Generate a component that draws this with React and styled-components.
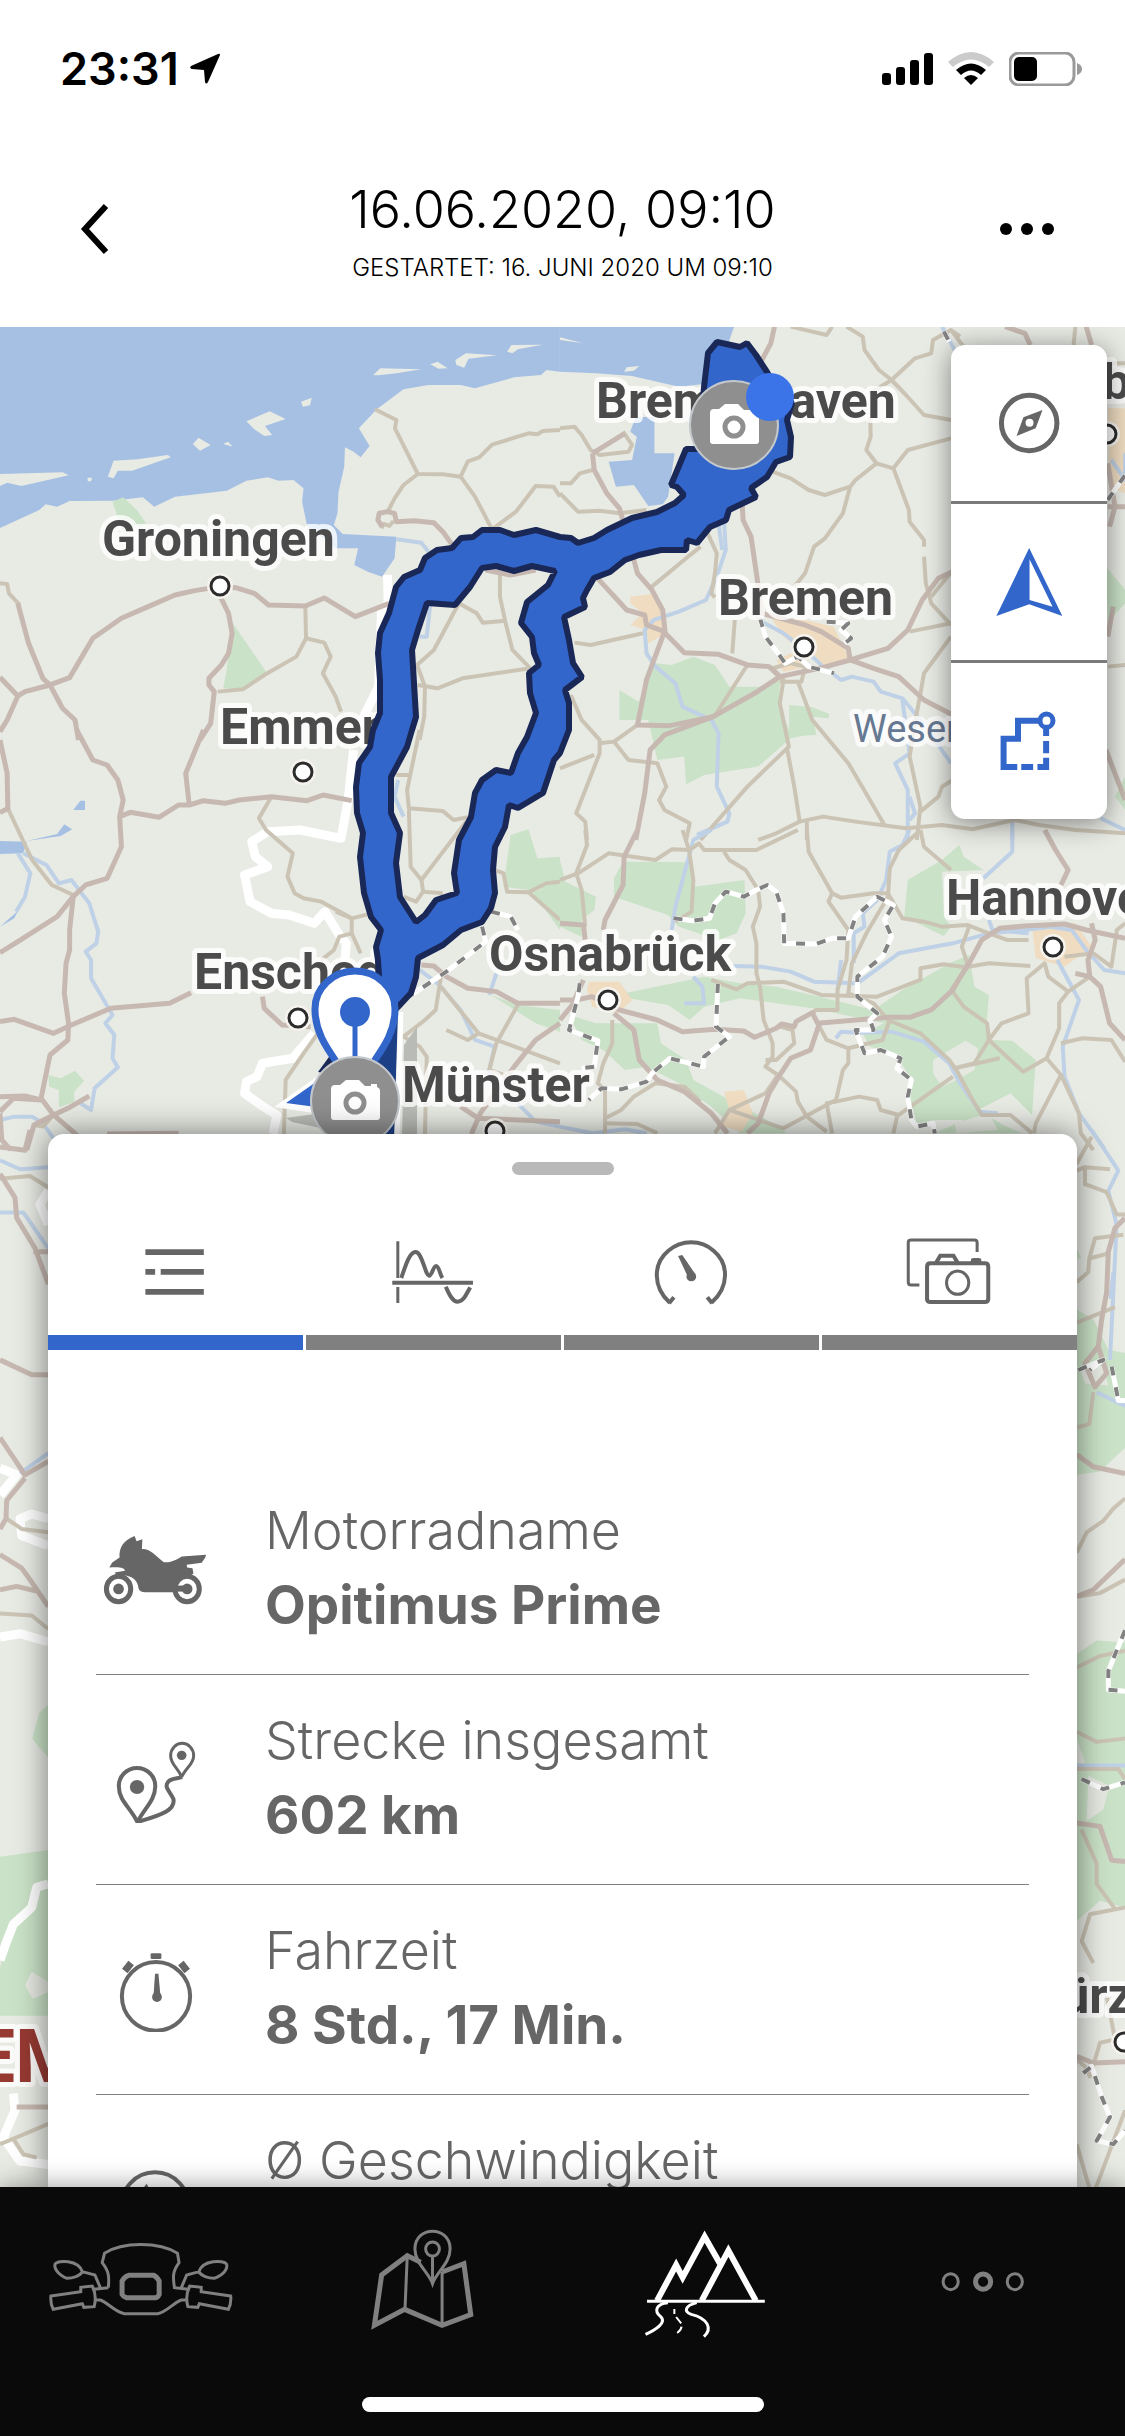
import React, { useState } from 'react'
import styled, { createGlobalStyle } from 'styled-components'

/* Each tile keeps its own drawing grid and is placed on the map by origin and scale */
const tiles = [
  {
    id: 'friesland',
    place: 'translate(0 320) scale(0.3571 0.3333)',
    water: [
      'M0 0H1568V155L1530 150L1515 165L1440 172L1330 205L1290 195L1200 195L1130 208L1055 268L1005 325L1035 378L1010 412L990 395L966 382L964 440L948 515L945 580L935 615L960 642L1110 650L1105 715L1070 770L1030 755L992 735L1003 685L940 685L860 618L846 545L850 505L822 480L780 482L750 472L690 482L635 512L490 530L432 560L400 532L315 542L195 543L160 560L128 553L110 570L0 624Z'
    ],
    land: [
      'M0 462L175 457L192 466L60 498L20 488L0 498Z',
      'M302 470L318 422L385 418L470 405L478 412L370 452L330 452L318 475Z',
      'M540 372L556 353L590 375L560 392Z',
      'M625 372L638 365L652 380Z',
      'M690 304L755 274L800 297L742 318L762 345L740 348L712 328Z',
      'M843 245L873 233L868 256L848 260Z',
      'M1045 165L1065 145L1180 148L1110 160L1060 166Z',
      'M1205 133L1225 125L1254 145L1228 146Z',
      'M1275 120L1305 100L1392 106L1312 116L1300 143L1278 135Z',
      'M1420 95L1432 75L1520 74L1450 88L1435 100Z',
      'M245 473L258 473L255 484L246 484Z'
    ],
    green: [
      'M315 545L345 532L385 572L410 612L345 640Z',
      'M652 910L745 1055L680 1110L625 1105L635 1050L642 980Z'
    ],
    motorway: [
      'M1090 850L995 890L908 834L855 858L752 855L712 820L660 803L617 800L545 812L490 825L415 860L340 895L260 955L195 1073L140 1095L70 1115L50 1128L0 1072',
      'M50 1128L20 1200L0 1235',
      'M617 830L640 880L650 940L640 1000L620 1035L585 1075L585 1095L600 1115L590 1210L560 1260',
      'M50 850L80 970L120 1075L140 1095L175 1165L210 1200L220 1260',
      'M1070 620L1058 600L1062 580L1085 575L1105 580L1110 605L1160 602L1215 608L1240 635L1270 680',
      'M1360 750L1430 765L1500 750'
    ],
    road: [
      'M1050 268L1110 300L1106 325L1170 462L1240 463L1290 470L1310 424L1342 412L1378 374L1480 340L1505 343L1520 333L1568 330',
      'M1170 462L1130 495L1105 535L1085 577',
      'M1290 470L1330 530L1378 628L1445 575L1500 498L1550 500L1568 530',
      'M0 790L20 792L25 820L55 855',
      'M855 858L857 955L830 1010L745 1062L680 1108L610 1115',
      'M857 955L908 968L926 1010L904 1060L940 1130L955 1175',
      'M1400 760L1400 830L1415 905L1435 990L1485 1045L1295 1075L1225 1105L1170 1095',
      'M1285 850L1335 880L1352 908L1415 902',
      'M1285 850L1215 990L1168 1035L1190 1100L1188 1190L1175 1260',
      'M1068 625L1075 612L1090 618L1102 603'
    ],
    river: ['M1110 658L1180 668L1200 695', 'M1205 850L1195 950L1175 950'],
    border: ['M1085 765L1087 850L1068 880L1060 1100L1000 1230']
  },
  {
    id: 'bremen',
    place: 'translate(560 320) scale(0.3604 0.3333)',
    water: [
      'M0 0H490L470 60L470 190L400 192L330 200L200 168L100 160L0 155Z',
      'M210 290L262 292L262 400L318 400L300 530L285 553L245 558L205 495L155 500L135 425L200 420L213 350L195 335Z'
    ],
    land: ['M0 52L65 70L0 60Z', 'M178 155L185 142L220 138L205 152Z'],
    green: [
      'M165 1110L218 1145L265 1030L310 1035L370 1010L430 1035L470 1100L560 1100L610 1080L608 1150L635 1230L710 1240L640 1255L550 1340L400 1365L350 1393L345 1310L270 1320L245 1200L165 1200Z',
      'M636 1155L700 1162L748 1182L745 1195L700 1190L712 1245L636 1248Z',
      'M1515 740L1568 810V850L1520 905Z',
      'M1568 1370L1540 1430L1568 1470Z'
    ],
    city: [
      'M195 830L255 822L290 885L285 945L245 970L240 930L195 915L230 880L195 850Z',
      'M585 890L680 900L760 920L795 1000L800 1030L740 1040L700 1015L620 950Z',
      'M1520 265L1568 265V520L1525 500Z',
      'M600 1020L640 1000L690 1040L620 1055Z'
    ],
    motorway: [
      'M595 20L585 70L560 120',
      'M1235 20L1290 40L1305 75',
      'M1460 20L1475 75',
      'M90 400L180 340M90 400L95 450L130 520L165 565L200 700L215 760L255 810L285 870L292 940L345 998L440 1003L520 1035L580 1040L610 1070L720 1045L805 1020L910 985L965 930L1005 840L1050 775L1090 755',
      'M100 770L185 870L235 885L240 915L290 935L240 1080L215 1215L305 1217L425 1190L540 1120L610 1070',
      'M425 1190L290 1245L250 1290L235 1420L210 1560',
      'M505 540L508 600L530 650L545 760L560 880L680 915L725 935L800 985L805 1020L870 1045L940 1070L1010 1140L1090 1185',
      'M1520 560L1568 560M1520 430L1540 560L1525 620',
      'M1535 860L1520 950M1515 1290L1568 1440'
    ],
    road: [
      'M640 20L740 45L755 20',
      'M795 20L840 50L845 90L885 150L920 180L960 225L1010 285L1085 300',
      'M1110 50L1085 30M920 180L985 115L1030 100L1035 60L1085 30L1120 80',
      'M920 180L860 220L862 350L850 390L878 430L925 445L965 390L1085 355',
      'M878 430L820 480L805 500L735 525L690 510L640 475L590 455',
      'M805 500L785 580L735 655L705 680L680 760L650 800',
      'M925 445L968 570L970 605L1010 660L1010 680',
      'M1010 710L1015 790L1030 850L1085 915',
      'M1090 750L1030 830M970 935L1085 910',
      'M0 325L40 320L60 345L85 390L110 405L190 395L200 375L175 335',
      'M90 450L55 460L30 490L0 490M0 520L50 575L110 572L165 580L240 570',
      'M410 640L435 700L430 760L420 820L430 832',
      'M390 680L350 715L255 800M40 968L85 975L230 940M485 900L478 1000',
      'M520 1035L425 1195M590 1045L620 1080L610 1150L635 1280L520 1400L390 1560',
      'M660 1085L700 1200L800 1330L860 1440L900 1515',
      'M610 1085L670 1085L680 1040L640 1030L590 1045',
      'M1085 950L1010 1060L990 1180L970 1310L1000 1460L990 1560',
      'M30 1125L60 1200L110 1260L110 1300L45 1480L70 1505L75 1560',
      'M215 1215L150 1265L110 1270M150 1265L190 1320L270 1330L295 1400L275 1440L290 1470L360 1510L350 1560',
      'M0 1345L95 1305M630 1285L650 1400L665 1505L600 1540L550 1560',
      'M665 1505L730 1490L820 1505L960 1525L1060 1515L1145 1528L1260 1500L1330 1515L1430 1530L1568 1540',
      'M685 1505V1560M1430 20L1425 75M1000 1475L1050 1430L1060 1400L1090 1380M1568 130L1520 130M1520 1040L1568 1035'
    ],
    river: [
      'M1060 20L1100 100',
      'M455 600L460 690L435 770L405 840L330 875L260 900L235 930L240 1000L265 1040L320 1090L340 1160L420 1200L440 1240L435 1400L470 1480L465 1505L380 1545',
      'M440 610L450 690',
      'M560 905L620 940L690 1000L730 1040L780 1080L810 1070L870 1085L890 1115L950 1135L1000 1200L1050 1275L1085 1330',
      'M950 1140L970 1300L930 1330L965 1410L965 1560M970 1430L985 1480L970 1500',
      'M1255 1497V1560M1568 400V480L1530 420M1500 1495L1568 1530'
    ],
    dash: ['M555 895L570 950L605 1000L625 1030L660 1010L690 1040L760 1060', 'M740 905L800 910L780 930L808 955L790 970', 'M1520 540L1568 465M1065 35L1080 65']
  },
  {
    id: 'twente',
    place: 'translate(0 730) scale(0.3571 0.3333)',
    water: ['M0 333L75 335L65 370L0 372Z', 'M75 333L160 312L180 283L202 298L170 318Z', 'M205 240L225 212H238V240Z', 'M0 590L50 543L40 565Z'],
    green: [
      'M135 1035L170 1045L210 1022L235 1052L208 1085L208 1115L165 1132L165 1080L138 1070Z',
      'M1430 315L1480 298L1505 385L1568 380V470L1480 480L1410 470Z',
      'M1490 485L1568 460V600Z',
      'M1375 795L1450 825L1568 840V905L1500 880Z'
    ],
    motorway: [
      'M215 0L260 90L300 105L330 150L345 210L335 260L340 350L300 445L240 465L205 500L160 560L50 635L0 668',
      'M335 260L365 247L445 262L500 225L530 225L570 212L630 220L670 210L760 200L860 212L905 195L985 212',
      'M570 0L520 130L530 225',
      'M0 30L20 130L22 235L0 248',
      'M205 500L195 600L195 660L185 700L180 790L192 880L190 930L140 975L115 1105L150 1155L210 1210L230 1240',
      'M0 875L40 868L150 910L200 885L310 835L475 820L535 788',
      'M735 800L740 835L790 885L870 890',
      'M0 1100L70 1098L115 1110L38 1105L0 1145',
      'M250 1098L190 1135L150 1155L95 1185L75 1260',
      'M300 1212L500 1210M0 1150L5 1230L30 1260',
      'M1180 705L1215 708L1250 740L1310 775L1390 785L1450 820L1568 820',
      'M1568 880L1500 930L1440 1010L1345 1150L1320 1212',
      'M1290 1130L1340 1165L1568 1175'
    ],
    road: [
      'M22 235L90 390L145 465L205 495',
      'M760 200L725 265L745 300L820 370L805 440L825 490L850 505L900 515L985 565L985 610L1010 670',
      'M940 545L985 565L1040 550M985 610L950 620L935 660L900 690',
      'M1175 0L1140 180L1145 235L1240 243L1270 270L1310 262M1145 240L1150 410L1180 450L1185 485L1240 490',
      'M1305 275L1180 450M1185 485L1165 515L1130 500M1110 135L1150 135',
      'M890 910L850 970L800 1050L795 1212',
      'M1235 740L1220 840L1190 870L1130 920L1175 950L1195 980L1190 1212',
      'M1235 770L1280 830L1340 910L1390 930L1568 1000M1340 910L1310 930L1250 900M1450 825L1390 940L1370 1020L1480 1060L1568 1110',
      'M1385 420L1410 430L1420 485L1480 487L1568 570M1480 487L1530 460L1568 455',
      'M95 1185L120 1190L150 1155'
    ],
    river: [
      'M65 370L130 405L165 460L200 450L250 520L275 605L270 640L240 665L255 690L255 745L315 855L295 880L320 915L315 985L330 1012L265 1075L255 1140L225 1120',
      'M50 370L85 430L70 500L45 545',
      'M1175 720L1225 760L1290 840L1330 930L1385 950L1370 1020L1390 1080',
      'M1390 730L1370 795M1568 1190L1500 1175L1450 1120M1115 150L1105 200L1130 260',
      'M0 1170L40 1160L90 1160L120 1180L150 1225'
    ],
    border: [
      'M990 60L975 210L955 325L840 300L750 305L705 335L715 380L750 410L685 435L700 515L760 550L810 555L880 580L910 545L950 615L970 640L965 700',
      'M880 910L820 985L735 1000L720 1040L690 1055L685 1090L730 1125L775 1155L765 1212'
    ],
    dash: ['M1375 545L1430 560L1450 600M1350 590L1360 635L1250 725L1145 800']
  },
  {
    id: 'weserbergland',
    place: 'translate(560 830) scale(0.3604 0.3333)',
    green: [
      'M0 90L15 155L80 190L100 200L95 240L60 270L60 320L0 290Z',
      'M175 95L360 97L375 170L512 150L515 250L490 310L440 330L330 290L300 255L150 200L150 145Z',
      'M965 150L1060 90L1108 45L1120 80L1175 120L1060 125L1065 260L1085 290L1065 318L955 260Z',
      'M180 490L400 440L500 460L600 470L720 500L870 540L950 480L1040 425L1080 400L1135 375L1150 470L1190 495L1185 570L1200 630L1255 632L1320 690L1310 855L1250 790L1160 840L1230 885L1280 910H1040L1120 870L1040 870L990 880L970 800L970 740L930 670L860 650L840 610L900 580L700 535L500 505L400 530L360 570L300 525L190 505Z',
      'M25 555L100 580L190 580L270 580L280 640L350 690L370 750L470 810L560 860L630 910H500L420 830L330 760L240 710L180 720L120 660L60 630Z'
    ],
    patch: [
      'M1035 690L1090 655L1125 632L1160 655L1150 720L1100 750L1060 770L1035 730Z',
      'M1095 880L1190 850L1215 900L1100 910Z'
    ],
    city: [
      'M80 455L165 455L200 510L160 550L90 530L75 480Z',
      'M455 785L510 780L535 850L505 905L440 885L470 840Z',
      'M1310 290L1430 280L1475 350L1400 410L1320 385Z'
    ],
    motorway: [
      'M215 0L178 80L175 165L125 270L120 300',
      'M0 570L45 510L90 500L165 540L270 570L340 605L430 598L510 603L540 622L600 595L615 582L650 590L655 575L700 548L715 580L910 562L970 562L1030 540L1085 485L1135 400L1170 330L1220 295L1290 288L1400 282L1460 300L1568 325',
      'M150 550L205 600L220 690L270 750L345 785L420 850L465 910',
      'M720 580L695 660L640 685L610 735L580 790L550 880L520 910',
      'M1345 0L1375 60L1410 120L1390 165M1475 280L1485 330L1465 390L1470 440L1500 470L1525 580L1568 630',
      'M0 280L65 285L70 330M0 510L40 510L65 450',
      'M1430 430L1470 440'
    ],
    road: [
      'M70 0L75 45L45 130L60 180L70 290',
      'M0 150L50 130L135 70L265 90L310 58L360 60L385 40L400 60L545 60L660 0',
      'M340 0L358 60L370 150L365 245L320 275',
      'M455 65L470 90L515 120L550 180L555 230L535 290L545 340L545 430L555 470L565 570L590 640L590 680L570 710L605 735L655 785L660 815L685 860L740 905',
      'M420 450L490 478L520 460L620 455L725 495L880 500L1000 450L1000 415L1065 403L1125 412L1190 400L1305 408',
      'M685 0L690 65L755 190L745 215L800 300L795 390L770 480L770 540L710 540L700 550',
      'M755 190L780 203L870 190L910 190L950 265L1010 275L1060 290L1130 285L1190 310L1240 330L1300 330',
      'M990 10L940 60L915 115L910 200L850 310L810 400L800 490L870 520L910 570L1000 610L1080 690L1100 720L1145 810L1170 855L1250 855L1310 910',
      'M1000 0L1010 50L1085 120M1135 290L1115 350L1130 400L1090 485L1120 530L1185 580L1190 630L1285 725L1350 685',
      'M610 590L645 600L650 640L600 690L570 690M720 590L740 630L800 655L800 700L785 720L765 815L830 800L880 810L890 840L940 855L1090 740M765 815L740 820L755 910',
      'M605 735L570 790L470 840L430 910M470 840L620 895L765 810',
      'M145 570L145 640L120 700L105 760L125 780L125 910M125 865L170 840L205 800L265 760L345 770L390 815',
      'M125 880L215 882L270 910M1190 630L1150 700L1095 715L1220 685M1190 630L1225 580L1300 550L1295 445L1345 400L1355 440L1410 485L1470 440',
      'M1410 485L1385 520L1385 595L1350 685L1390 735L1320 880L1315 910M1390 735L1440 850L1445 910L1480 960M1390 640L1450 625L1530 630L1568 695',
      'M1400 380L1480 370L1530 410L1545 300L1568 280M800 655L895 630L915 570M935 860L925 910'
    ],
    river: [
      'M420 0L370 30L365 50L320 230L310 300',
      'M970 0L950 45L915 65L905 150L880 210L840 250L845 290L815 310L815 400M780 390L770 480',
      'M480 408L560 410L640 425L705 455L825 460L940 370L1090 340L1190 310L1290 300L1360 290L1420 300L1460 360L1510 420L1568 430',
      'M1255 0V65L1175 145M1190 270L1200 300L1300 310',
      'M345 520L400 520L395 470L370 440M765 625L780 605L830 608L920 605L1010 635L1080 700L1110 760L1165 845L1215 850',
      'M1380 390L1440 510L1395 650L1400 740L1440 850L1510 955',
      'M0 890L90 910L180 898L240 910'
    ],
    dash: [
      'M315 265L370 272L415 265L430 220L460 185L510 200L545 180L575 165L600 185L620 250L622 340L710 342L755 325L800 325L820 260L880 200L925 225L900 270L920 320L895 380L825 440L825 500L880 550L860 570L870 600L820 600L845 670L890 660L945 685L935 715L975 750L965 800L975 870L990 890L1035 880L1040 910',
      'M438 462L433 590L470 620L400 680L398 710L305 685L255 730L240 755L170 778L115 775L80 810',
      'M55 460L50 500L25 600L105 632L95 710L60 715'
    ]
  },
  {
    id: 'east',
    place: 'translate(1060 1130) scale(0.3333 0.6761)',
    green: [
      'M50 175L64 190L50 190Z',
      'M50 265L100 280L145 325L195 330V470L120 505L50 510Z',
      'M50 775L110 755L195 758V1150L120 1140L50 1170Z'
    ],
    patch: ['M60 355L80 345L130 350L145 378L75 375Z', 'M50 900L75 935L52 945Z', 'M85 955L148 970L130 1005L80 1022Z'],
    motorway: ['M195 130L165 145L145 180L140 240L125 280L115 320L75 345L105 380L140 360L115 320', 'M50 480L100 498L195 508M50 690L100 680L195 635', 'M50 1025L120 1030L155 1080L195 1082M50 1370L100 1380L195 1378'],
    road: ['M95 10L50 50M50 60L75 55L75 80L140 92L170 125L195 125M75 55L150 58', 'M88 190L105 160L190 155M50 225L85 210L88 190L150 182M50 285L165 262', 'M50 440L88 435L100 388M50 625L80 595L130 578L160 560L195 545M55 690L120 685L195 665', 'M50 795L120 778L195 770M50 890L110 905L195 900M50 945L175 945L195 960', 'M65 1035L110 1085L110 1115L165 1152M195 1150L90 1160L65 1200L100 1232', 'M140 1280L165 1345L120 1350L90 1400L75 1385L50 1375M50 1500L90 1568M105 1568L195 1450'],
    river: ['M95 0L175 60L145 90L170 140L150 340M160 210L152 250M50 940L195 940M110 388L195 408'],
    dash: ['M55 355L130 340L90 355M155 350L175 400L195 400', 'M195 740L145 800L145 828L195 830M65 960L130 975L195 965', 'M70 1395L95 1385L125 1430L150 1460L110 1495L160 1500L195 1480']
  },
  {
    id: 'west',
    place: 'translate(0 1130) scale(0.3333 0.6761)',
    green: ['M145 850L118 862L97 900L115 912L145 928Z', 'M0 1075L145 1065V1310L0 1310Z'],
    patch: ['M75 1265L95 1245L145 1260V1275L98 1285Z', 'M0 1212L30 1180L0 1240Z'],
    motorway: ['M90 0L75 30L0 25', 'M0 65L45 100L50 130L105 175L145 228M100 180H145', 'M0 340L95 362H145M0 455L75 510L145 490M75 515L20 548L18 575L0 590', 'M0 628L65 648L90 665L145 705M0 680L50 675L110 682M50 1445H145'],
    road: ['M0 72L90 68L145 85M20 575L65 590L145 595M0 715L95 718L145 738M0 1500L50 1490L145 1470M40 1492L70 1515L110 1520'],
    river: ['M0 45L60 58L145 55M0 122H70L145 175M60 508L145 478'],
    border: ['M145 90L120 110L145 140M145 575L95 568L60 575L65 600L145 615M0 500L50 510L0 540M0 750L60 745L145 757', 'M145 1115L110 1120L95 1150L40 1175L20 1200L0 1228M40 1425L45 1450L10 1490L60 1525L145 1530']
  }
]

const labels = [
  { name: 'Groningen', x: 102, y: 556, dot: [220, 586] },
  { name: 'Emmen', x: 220, y: 744, dot: [303, 772] },
  { name: 'Enschede', x: 194, y: 989, dot: [298, 1018] },
  { name: 'Osnabrück', x: 489, y: 971, dot: [608, 1000] },
  { name: 'Bremerhaven', x: 596, y: 418 },
  { name: 'Bremen', x: 718, y: 615, dot: [804, 647] },
  { name: 'Hannover', x: 946, y: 915, dot: [1053, 947] },
  { name: 'Hamburg', x: 997, y: 399, dot: [1107, 434] },
  { name: 'Würzburg', x: 1018, y: 2013, dot: [1124, 2042] }
]

const routeShape = `M379 1000L379 976L378 960L376 947L381 930L371 917L364 893L360 857L363 833L357 813L356 787L359 763L370 747L373 730L380 713L380 680L378 653L380 633L389 613L396 587L404 577L420 570L425 558L437 550L452 548L461 538L473 537L482 530L500 530L514 535L536 530L560 537L571 538L578 543L594 538L607 530L632 518L657 512L675 503L684 495L677 487L671 485L686 449L699 449L704 387L708 353L717 342L740 347L747 343L756 355L767 372L776 387L792 403L787 420L791 437L790 457L776 462L767 477L751 488L756 497L729 510L726 520L710 527L697 543L687 540L686 550L661 550L639 555L625 560L610 572L594 578L587 590L583 598L585 607L564 617L569 640L573 663L582 677L565 690L569 703L569 730L560 753L554 760L543 793L518 808L509 805L505 827L495 847L493 870L495 893L491 908L482 922L461 930L443 945L418 958L416 977L411 993L398 1007L385 1020Z
M416 922L400 897L396 863L400 833L391 813L391 777L407 747L412 730L416 717L414 683L412 650L418 630L427 603L455 605L470 587L482 568L496 566L514 571L532 566L555 571L548 585L527 602L521 623L532 637L534 653L539 665L529 673L530 693L536 713L527 737L518 753L511 773L496 770L482 780L475 793L471 817L459 840L454 873L457 893L436 900L425 915Z`

const tabs = ['Liste', 'Diagramm', 'Tacho', 'Fotos']

const rows = [
  { icon: 'bike', label: 'Motorradname', value: 'Opitimus Prime' },
  { icon: 'route', label: 'Strecke insgesamt', value: '602 km' },
  { icon: 'clock', label: 'Fahrzeit', value: '8 Std., 17 Min.' },
  { icon: 'speed', label: 'Ø Geschwindigkeit', value: '' }
]

const Lines = ({ paths = [], color, width }) => paths.map((d) => (
  <path key={d} d={d} fill="none" stroke={color} strokeWidth={width} strokeLinejoin="round" vectorEffect="non-scaling-stroke" />
))

const Areas = ({ paths = [], color }) => paths.map((d) => <path key={d} d={d} fill={color} />)

const CityDot = ({ at }) => (
  <>
    <circle cx={at[0]} cy={at[1]} r="13" fill="#f6f3ee" />
    <circle cx={at[0]} cy={at[1]} r="9" fill="#fff" stroke="#2c2c2c" strokeWidth="3" />
  </>
)

const CameraPin = ({ x, y }) => (
  <g transform={`translate(${x} ${y})`}>
    <circle r="44" fill="#8f8f8f" stroke="#c4c8cc" strokeWidth="2" />
    <path d="M-24 -12Q-24 -16 -20 -16H-15L-9 -21H4L10 -15H16V-17H22V-14Q25 -13 25 -10V16Q25 19 22 19H-21Q-24 19 -24 16Z" fill="#fff" />
    <circle cy="2" r="9" fill="none" stroke="#8f8f8f" strokeWidth="5" />
  </g>
)

const TourMap = () => (
  <MapCanvas viewBox="0 327 1125 1860" preserveAspectRatio="xMidYMin slice" role="img" aria-label="Karte">
    <rect y="327" width="1125" height="1860" fill="#e8eae4" />
    {tiles.map((tile) => (
      <g key={tile.id} transform={tile.place}>
        <Areas paths={tile.water} color="#a6c0e4" />
        <Areas paths={tile.land} color="#e8eae4" />
        <Areas paths={tile.green} color="#cae2c7" />
        <Areas paths={tile.patch} color="#e6e9e2" />
        <Areas paths={tile.city} color="#efdcc1" />
        <Lines paths={tile.border} color="#fff" width={9} />
        <Lines paths={tile.river} color="#bfd1e6" width={4} />
        <Lines paths={tile.road} color="#cbc4b5" width={4} />
        <Lines paths={tile.motorway} color="#c7b9b1" width={5} />
        <Lines paths={tile.dash} color="#fff" width={5} />
        <g strokeDasharray="9 12">
          <Lines paths={tile.dash} color="#828282" width={4} />
        </g>
      </g>
    ))}
    {labels.map(({ name, x, y, dot }) => (
      <g key={name}>
        {dot && <CityDot at={dot} />}
        <CityName x={x} y={y}>{name}</CityName>
      </g>
    ))}
    <RiverName x="853" y="742">Weser</RiverName>
    <CountryName x="80" y="2082" textAnchor="end">LUXEM</CountryName>
    <path d="M404 1045L417 1027V1140H402Z" fill="#b9bbb6" />
    <path d="M286 1118L330 1112V1130L292 1122Z" fill="#babcb7" />
    <path d={routeShape} fill="#3366cb" fillRule="evenodd" stroke="#1a2857" strokeWidth="6" strokeLinejoin="bevel" />
    <path d="M318 1072L334 1050L340 1076Z" fill="#1a2857" />
    <path d="M274 1107L332 1066V1116Z" fill="#fff" />
    <path d="M286 1103L316 1082V1107Z" fill="#3366cb" />
    <path d="M398 1010L394 1140H360V1060Z" fill="#1d3f86" />
    <path d="M401 1012L397 1140" stroke="#fff" strokeWidth="5" />
    <CityDot at={[495, 1131]} />
    <CityName x="402" y="1102">Münster</CityName>
    <path d="M355 1096C345 1064 315 1046 315 1009A40 38 0 0 1 395 1009C395 1046 365 1064 355 1096Z" fill="#fff" stroke="#3366cb" strokeWidth="7" />
    <circle cx="355" cy="1012" r="15" fill="#3366cb" />
    <path d="M355 1012V1070" stroke="#3366cb" strokeWidth="5" />
    <CameraPin x={355} y={1101} />
    <CameraPin x={734} y={425} />
    <circle cx="770" cy="397" r="24" fill="#3a74e8" />
  </MapCanvas>
)

const Stroked = (props) => <path fill="none" stroke="currentColor" strokeWidth="4" vectorEffect="non-scaling-stroke" {...props} />
const Ring = (props) => <ellipse fill="none" stroke="currentColor" strokeWidth="4" vectorEffect="non-scaling-stroke" {...props} />

const rowIcons = {
  bike: (
    <Icon $w={107} $h={72} viewBox="213 160 220 215">
      <path fill="currentColor" d="M278 166L282 182L294 176L293 205C310 204 318 222 338 244C355 246 365 235 375 227L425 222L423 231L416 246L385 252L386 260L397 262L399 278L390 287C372 286 358 300 362 334H300Q288 334 286 322C284 300 276 290 262 285L240 281L237 275L258 270C258 262 250 258 226 260L232 245L247 230C246 205 252 180 278 166Z" />
      <Ring cx="245" cy="324" rx="25" ry="38" strokeWidth="5" />
      <Ring cx="386" cy="324" rx="25" ry="38" strokeWidth="5" />
      <ellipse fill="currentColor" cx="245" cy="324" rx="11" ry="16" />
      <ellipse fill="currentColor" cx="386" cy="324" rx="11" ry="16" />
      <path fill="currentColor" d="M355 314H386V332H355Z" />
      <path d="M268 290C278 300 281 315 282 332" fill="none" stroke="#fff" strokeWidth="3" />
    </Icon>
  ),
  route: (
    <Icon $w={84} $h={86} viewBox="235 768 175 258">
      <Stroked d="M284 1024C270 980 245 960 245 915A38 54 0 0 1 321 915C321 960 296 985 284 1024Z" />
      <Stroked d="M376 888C368 860 353 850 353 824A24 37 0 0 1 401 824C401 850 384 860 376 888" strokeWidth="3" />
      <Stroked d="M286 1022C340 1000 362 985 359 955C352 930 338 920 348 902C354 892 368 893 377 888" />
      <ellipse fill="currentColor" cx="283" cy="918" rx="15" ry="21" />
      <ellipse fill="currentColor" cx="376" cy="823" rx="10" ry="14" />
    </Icon>
  ),
  clock: (
    <Icon $w={78} $h={84} viewBox="243 203 160 252">
      <Ring cx="323" cy="348" rx="70" ry="103" />
      <rect fill="currentColor" x="312" y="219" width="22" height="17" rx="3" />
      <Stroked d="M259 272L272 248M387 272L374 248" strokeWidth="7" />
      <path fill="currentColor" d="M321 280H328L332 345H318Z" />
      <ellipse fill="currentColor" cx="325" cy="350" rx="10" ry="15" />
    </Icon>
  ),
  speed: (
    <Icon $w={78} $h={84} viewBox="243 835 160 250">
      <Stroked d="M280 1060A69 101 0 1 1 362 1060" />
      <path fill="currentColor" d="M299 920L304 912L326 975H315Z" />
      <ellipse fill="currentColor" cx="321" cy="980" rx="9" ry="13" />
    </Icon>
  )
}

const tabIcons = [
  <Icon key="list" $w={96} $h={84} viewBox="128 300 138 252">
    <path fill="currentColor" d="M153 358H237V375H153ZM153 417H167V434H153ZM175 417H237V434H175ZM153 477H237V494H153Z" />
  </Icon>,
  <Icon key="chart" $w={96} $h={84} viewBox="501 300 138 252">
    <Stroked d="M518 334V444M518 471V519" strokeWidth="3" />
    <Stroked d="M510 458H626" />
    <Stroked d="M523 444C530 400 535 368 543 366C553 364 557 435 563 437C567 437 569 408 573 408C577 408 578 430 582 444M587 470C592 495 597 515 604 515C612 515 616 495 622 472" />
  </Icon>,
  <Icon key="gauge" $w={96} $h={84} viewBox="873 300 138 252">
    <Stroked d="M910 518C885 470 886 400 908 362C927 328 955 328 973 362C995 400 996 470 970 518M909 520L916 502M971 520L964 502" />
    <path fill="currentColor" d="M922 378L928 375L946 430L936 440Z" />
    <ellipse fill="currentColor" cx="941" cy="440" rx="7" ry="14" />
  </Icon>,
  <Icon key="photos" $w={96} $h={84} viewBox="1246 300 138 252">
    <Stroked d="M1271 465H1259Q1255 465 1255 456V338Q1255 330 1259 330H1350Q1354 330 1354 338V366" strokeWidth="3" />
    <Stroked d="M1287 400H1365Q1370 400 1370 410V507Q1370 516 1365 516H1287Q1282 516 1282 507V410Q1282 400 1287 400ZM1295 398L1301 377H1320L1326 398" />
    <path fill="currentColor" d="M1345 400V390Q1345 384 1349 384H1356Q1360 384 1360 390V400Z" />
    <Ring cx="1326" cy="458" rx="16" ry="35" strokeWidth="3" />
  </Icon>
]

const navItems = [
  {
    name: 'Fahren',
    icon: (
      <Icon $w={200} $h={120} viewBox="107 131 523 360">
        <Stroked strokeWidth="3" d="M283 325L245 330M283 325C286 290 284 275 267 250L273 222C320 187 416 187 464 222L468 250C452 275 451 290 456 325L492 330" />
        <Stroked strokeWidth="3" d="M262 325L248 287L215 277C210 290 190 297 175 297C150 285 140 265 144 254C150 242 205 240 215 277M474 325L488 287L520 277C525 290 545 297 560 297C588 285 596 265 592 254C585 242 530 240 520 277" />
        <Stroked strokeWidth="3" d="M133 350L211 337V324L241 320C252 345 250 365 246 382L219 384L215 373L139 390C132 375 132 362 133 350ZM603 350L526 337V324L496 320C485 345 487 365 491 382L517 384L521 373L597 390C604 375 604 362 603 350Z" />
        <Stroked strokeWidth="3" d="M248 362H262C280 368 300 398 325 403H412C436 398 456 368 474 362H489" />
        <Stroked strokeWidth="5" d="M336 288H402Q410 292 416 305V345Q412 355 406 355H330Q322 352 319 345V305Q325 292 336 288Z" />
      </Icon>
    )
  },
  {
    name: 'Karte',
    icon: (
      <Icon $w={200} $h={120} viewBox="842 129 523 360">
        <Stroked strokeWidth="5" d="M1100 247L1065 227L998 285L979 436L1058 388L1156 436L1231 404L1213 251L1156 276" />
        <Stroked strokeWidth="3" d="M1065 227L1059 388M1156 276V436" />
        <Stroked strokeWidth="3" d="M1131 311C1120 275 1085 250 1085 207C1085 136 1177 136 1177 207C1177 250 1142 275 1131 311ZM1131 229V300" />
        <Ring cx="1131" cy="207" rx="18" ry="21" strokeWidth="3" />
      </Icon>
    )
  },
  {
    name: 'Touren',
    active: true,
    icon: (
      <Icon $w={200} $h={120} viewBox="120 129 555 360">
        <Stroked strokeWidth="6" d="M270 362L323 255L341 292L402 170L444 250M394 362L468 212L544 362" />
        <Stroked strokeWidth="3" d="M242 364H569" />
        <Stroked strokeWidth="3" d="M300 368C265 372 262 395 280 410C298 428 265 450 238 463M380 368C345 378 345 395 365 403C410 415 425 445 400 470" />
        <Stroked strokeWidth="2" d="M318 387V402M323 411L337 430M338 440Q337 450 326 459" />
      </Icon>
    )
  },
  {
    name: 'Mehr',
    icon: (
      <Icon $w={200} $h={120} viewBox="899 129 555 360">
        <Ring cx="1084" cy="305" rx="21" ry="24" strokeWidth="3" />
        <Ring cx="1174" cy="305" rx="21" ry="23" strokeWidth="5" />
        <Ring cx="1262" cy="305" rx="21" ry="24" strokeWidth="3" />
      </Icon>
    )
  }
]

function Icon({ $w, $h, viewBox, children }) {
  return <Glyph width={$w} height={$h} viewBox={viewBox} preserveAspectRatio="none" aria-hidden="true">{children}</Glyph>
}

const App = () => {
  const [activeTab, setActiveTab] = useState(0)

  return (
    <Screen>
      <GlobalStyle />
      <StatusBar>
        <Clock>
          23:31
          <svg width="32" height="32" viewBox="0 0 32 32" aria-hidden="true">
            <path d="M31 2Q31 0 29 1L2 13Q0 15 3 16L15 17L16 29Q17 32 19 29Z" />
          </svg>
        </Clock>
        <StatusIcons>
          <svg width="52" height="34" viewBox="0 0 52 34" aria-hidden="true">
            <rect x="1" y="21" width="9" height="12" rx="3" />
            <rect x="15" y="15" width="9" height="18" rx="3" />
            <rect x="29" y="8" width="9" height="25" rx="3" />
            <rect x="43" y="1" width="9" height="32" rx="3" />
          </svg>
          <svg width="46" height="34" viewBox="0 0 46 34" aria-hidden="true">
            <path d="M0 10Q23 -10 46 10L41 15Q23 0 5 15Z" fill="#cbcbcb" />
            <path d="M8 18Q23 5 38 18L33 23Q23 14 13 23Z" />
            <path d="M16 26Q23 20 30 26L23 33Z" />
          </svg>
          <svg width="74" height="34" viewBox="0 0 74 34" aria-hidden="true">
            <rect x="1" y="1" width="64" height="32" rx="9" fill="none" stroke="#9a9a9a" strokeWidth="3" />
            <rect x="5" y="5" width="23" height="24" rx="5" />
            <path d="M68 11Q73 13 73 17T68 23Z" fill="#9a9a9a" />
          </svg>
        </StatusIcons>
      </StatusBar>
      <TitleBar>
        <BarButton type="button" aria-label="Zurück">
          <svg width="40" height="52" viewBox="0 0 40 52" aria-hidden="true">
            <path d="M28 3L7 26L28 49" fill="none" stroke="#000" strokeWidth="6" />
          </svg>
        </BarButton>
        <Heading>
          <Title>16.06.2020, 09:10</Title>
          <Subtitle>GESTARTET: 16. JUNI 2020 UM 09:10</Subtitle>
        </Heading>
        <BarButton type="button" aria-label="Optionen">
          <svg width="56" height="14" viewBox="0 0 56 14" aria-hidden="true">
            <circle cx="7" cy="7" r="6" />
            <circle cx="28" cy="7" r="6" />
            <circle cx="49" cy="7" r="6" />
          </svg>
        </BarButton>
      </TitleBar>

      <Stage>
        <TourMap />
        <MapTools>
          <ToolButton type="button" aria-label="Kompass">
            <Icon $w={84} $h={84} viewBox="1184 183 233 252">
              <Ring cx="1301" cy="309" rx="77" ry="83" strokeWidth="5" />
              <path fill="currentColor" fillRule="evenodd" d="M1338 270L1319 325L1266 348L1285 292ZM1302 296A11 12 0 1 0 1302 320A11 12 0 1 0 1302 296Z" />
            </Icon>
          </ToolButton>
          <ToolButton type="button" aria-label="Norden" $blue>
            <Icon $w={84} $h={84} viewBox="1184 660 233 252">
              <path fill="currentColor" fillRule="evenodd" d="M1301 684L1393 888L1301 853L1210 888ZM1302 718V840L1366 860Z" />
            </Icon>
          </ToolButton>
          <ToolButton type="button" aria-label="Ausschnitt" $blue>
            <Icon $w={84} $h={84} viewBox="1184 1137 233 252">
              <Stroked strokeWidth="6" d="M1332 1202H1270V1256H1230V1341H1268M1279 1341H1312M1324 1341H1348V1313M1348 1300V1263M1348 1248V1220" />
              <Ring cx="1349" cy="1202" rx="18" ry="20" strokeWidth="5" />
            </Icon>
          </ToolButton>
        </MapTools>

        <Sheet>
          <Handle />
          <Tabs role="tablist">
            {tabs.map((name, index) => (
              <Tab key={name} type="button" role="tab" aria-label={name} aria-selected={index === activeTab} $active={index === activeTab} onClick={() => setActiveTab(index)}>
                {tabIcons[index]}
              </Tab>
            ))}
          </Tabs>
          <Rows>
            {rows.map((row) => (
              <Row key={row.label}>
                <RowIcon>{rowIcons[row.icon]}</RowIcon>
                <RowText>
                  <Label>{row.label}</Label>
                  <Value>{row.value}</Value>
                </RowText>
              </Row>
            ))}
          </Rows>
        </Sheet>
      </Stage>

      <BottomNav>
        <NavItems>
          {navItems.map((item) => (
            <NavLink key={item.name} href={`#${item.name.toLowerCase()}`} aria-label={item.name} $active={item.active}>
              {item.icon}
            </NavLink>
          ))}
        </NavItems>
        <HomeIndicator />
      </BottomNav>
    </Screen>
  )
}

export default App

const GlobalStyle = createGlobalStyle`
* {
  box-sizing: border-box;
}

body {
  margin: 0;
  background: #fff;
  font-family: Inter, "Liberation Sans", sans-serif;
}

button {
  border: 0;
  padding: 0;
  background: none;
  font: inherit;
  cursor: pointer;
}
`

const Screen = styled.div`
display: flex;
flex-direction: column;
height: 100vh;
min-height: 1400px;
overflow: hidden;
`

const Glyph = styled.svg`
display: block;
flex: none;
`

const StatusBar = styled.div`
display: flex;
align-items: center;
justify-content: space-between;
height: 138px;
padding: 0 42px 0 60px;
flex: none;
`

const Clock = styled.div`
display: flex;
align-items: center;
gap: 10px;
font-size: 45px;
font-weight: 600;
line-height: 52px;
`

const StatusIcons = styled.div`
display: flex;
align-items: center;
gap: 15px;
`

const TitleBar = styled.header`
display: grid;
grid-template-columns: 196px 1fr 196px;
align-items: start;
padding: 40px 0 33px;
flex: none;
`

const BarButton = styled.button`
display: flex;
align-items: center;
justify-content: center;
height: 102px;
`

const Heading = styled.div`
text-align: center;
color: #000;
`

const Title = styled.h1`
margin: 0;
font-size: 52px;
font-weight: 300;
line-height: 64px;
`

const Subtitle = styled.p`
margin: 0;
font-size: 24px;
font-weight: 300;
line-height: 52px;
`

const Stage = styled.main`
position: relative;
flex: 1;
min-height: 0;
overflow: hidden;
`

const MapCanvas = styled.svg`
display: block;
width: 100%;
height: 100%;
`

const CityName = styled.text`
font-family: Roboto, "Liberation Sans", sans-serif;
font-size: 50px;
font-weight: 700;
fill: #4b4b4b;
stroke: rgba(255, 255, 255, 0.8);
stroke-width: 10px;
stroke-linejoin: round;
paint-order: stroke;
`

const RiverName = styled(CityName)`
font-size: 38px;
font-weight: 400;
fill: #667892;
`

const CountryName = styled(CityName)`
font-size: 74px;
fill: #963a32;
`

const MapTools = styled.div`
position: absolute;
top: 18px;
right: 18px;
width: 156px;
border-radius: 14px;
background: #fff;
box-shadow: 0 4px 28px rgba(0, 0, 0, 0.45);
`

const ToolButton = styled.button`
display: flex;
align-items: center;
justify-content: center;
width: 100%;
height: 156px;
color: ${(props) => (props.$blue ? '#3366cb' : '#666')};

& + & {
  height: 159px;
  border-top: 3px solid #7a7a7a;
}
`

const Sheet = styled.section`
position: absolute;
top: 807px;
right: 48px;
bottom: 0;
left: 48px;
overflow: hidden;
padding-top: 28px;
border-radius: 16px 16px 0 0;
background: #fff;
color: #666;
box-shadow: 0 0 32px rgba(0, 0, 0, 0.5);
`

const Handle = styled.div`
width: 102px;
height: 13px;
margin: 0 auto;
border-radius: 7px;
background: #b9b9b9;
`

const Tabs = styled.div`
display: grid;
grid-template-columns: repeat(4, 1fr);
gap: 3px;
`

const Tab = styled.button`
display: flex;
justify-content: center;
padding: 55px 0 21px;
border-bottom: 15px solid ${(props) => (props.$active ? '#3366cb' : '#808080')};
color: #666;
`

const Rows = styled.ul`
margin: 0;
padding: 115px 48px 0;
list-style: none;
`

const Row = styled.li`
display: flex;
align-items: center;
gap: 49px;
height: 210px;
border-bottom: 1px solid #808080;
`

const RowIcon = styled.div`
display: flex;
justify-content: center;
width: 120px;
`

const RowText = styled.div`
padding-bottom: 3px;
font-size: 52px;
line-height: 75px;
`

const Label = styled.div`
font-weight: 300;
`

const Value = styled.div`
min-height: 75px;
font-size: 53px;
font-weight: 700;
`

const BottomNav = styled.nav`
position: relative;
flex: none;
padding: 36px 0 24px;
background: #0a0a0a;
box-shadow: 0 -2px 24px rgba(0, 0, 0, 0.35);
`

const NavItems = styled.div`
display: grid;
grid-template-columns: repeat(4, 1fr);
`

const NavLink = styled.a`
display: flex;
justify-content: center;
color: ${(props) => (props.$active ? '#fff' : '#808080')};
`

const HomeIndicator = styled.div`
width: 402px;
height: 15px;
margin: 54px auto 0;
border-radius: 8px;
background: #fff;
`
